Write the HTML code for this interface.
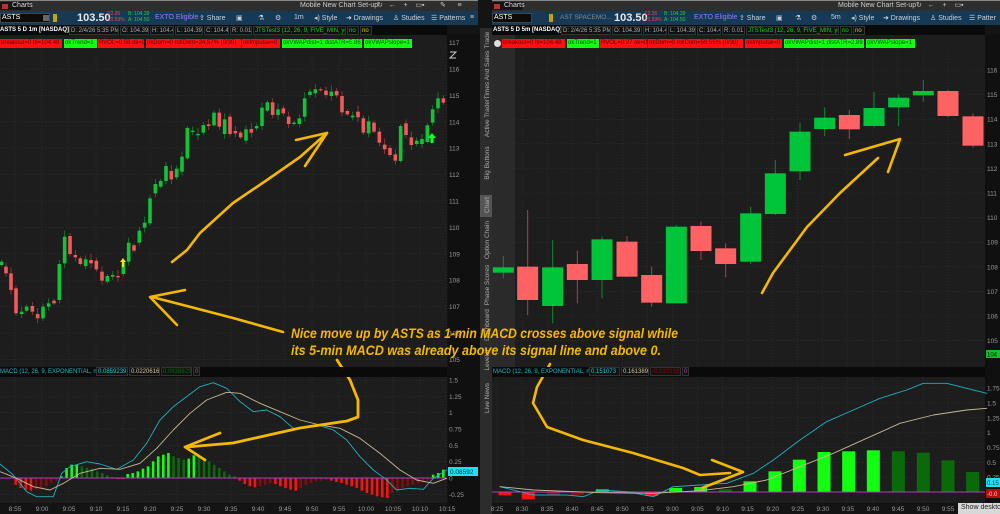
<!DOCTYPE html>
<html><head><meta charset="utf-8"><style>
*{margin:0;padding:0;box-sizing:border-box}
body{width:1000px;height:514px;overflow:hidden;background:#141414;font-family:"Liberation Sans",sans-serif;position:relative}
.a{position:absolute;white-space:nowrap}
.t{font-size:7px;line-height:9px}
.box{position:absolute;height:9px;font-size:6px;line-height:9px;padding:0 1px;white-space:nowrap;overflow:hidden}
.r{background:#ff1010;color:#600}
.g{background:#10ff10;color:#050}
.ib{position:absolute;height:9px;font-size:6px;line-height:8px;border:1px solid #333;color:#aaa;padding:0 1px;white-space:nowrap;background:#111;overflow:hidden}
.tb{font-size:7px;color:#c8d2dc}
</style></head><body>
<div class="a" style="left:0;top:0;width:478px;height:11px;background:#2e2e2e;border-top:1px solid #888"></div>
<div class="a" style="left:492px;top:0;width:508px;height:11px;background:#2e2e2e;border-top:1px solid #888"></div>
<div class="a" style="left:0;top:2px;width:31px;height:8px;background:#141414;border-radius:2px"></div>
<div class="a t" style="left:12px;top:1px;color:#ddd">Charts</div>
<div class="a" style="left:2px;top:4px;width:6px;height:5px;background:#c0302a"></div>
<div class="a" style="left:492px;top:2px;width:31px;height:8px;background:#141414;border-radius:2px"></div>
<div class="a" style="left:494px;top:4px;width:6px;height:5px;background:#c0302a"></div>
<div class="a t" style="left:504px;top:1px;color:#ddd">Charts</div>
<div class="a t" style="left:300px;top:1px;color:#ccc">Mobile New Chart Set-up</div>
<div class="a t" style="left:838px;top:1px;color:#ccc">Mobile New Chart Set-up</div>
<div class="a t" style="left:377px;top:1px;color:#ccc">↻ &nbsp; ← &nbsp;&nbsp; + &nbsp;&nbsp; ▭▪ &nbsp;&nbsp;&nbsp;&nbsp;&nbsp;&nbsp; ✎ &nbsp;&nbsp;&nbsp;&nbsp; ≡</div>
<div class="a t" style="left:916px;top:1px;color:#ccc">↻ &nbsp; ← &nbsp;&nbsp; + &nbsp;&nbsp; ▭▪</div>
<div class="a" style="left:0;top:11px;width:478px;height:14px;background:#163955"></div>
<div class="a" style="left:492px;top:11px;width:508px;height:14px;background:#163955"></div>
<div class="a" style="left:0;top:13px;width:50px;height:10px;background:#0c0c0c;border:1px solid #444"></div>
<div class="a tb" style="left:2px;top:14px;color:#fff">ASTS</div>
<div class="a" style="left:43px;top:15px;width:6px;height:6px;background:#666"></div>
<div class="a" style="left:53px;top:14px;width:4px;height:8px;background:#c8a000"></div>
<div class="a" style="left:77px;top:12px;font-size:11px;font-weight:bold;color:#e8e8e8">103.50</div>
<div class="a" style="left:106px;top:12px;font-size:5px;line-height:5.5px;color:#ff4040">-12.26<br>-10.59%</div>
<div class="a" style="left:128px;top:12px;font-size:5px;line-height:5.5px;color:#20d040">B: 104.39<br>A: 104.50</div>
<div class="a tb" style="left:155px;top:14px;color:#9a7aff">EXTO Eligible</div>
<div class="a tb" style="left:199px;top:14px">⇪ Share</div>
<div class="a tb" style="left:236px;top:14px">▣</div>
<div class="a tb" style="left:258px;top:14px">⚗</div>
<div class="a tb" style="left:275px;top:14px">⚙</div>
<div class="a tb" style="left:294px;top:14px">1m</div>
<div class="a tb" style="left:314px;top:14px">◂) Style</div>
<div class="a tb" style="left:346px;top:14px">➜ Drawings</div>
<div class="a tb" style="left:393px;top:14px">♙ Studies</div>
<div class="a tb" style="left:431px;top:14px">☰ Patterns</div>
<div class="a tb" style="left:470px;top:14px">≡</div>
<div class="a" style="left:492px;top:13px;width:40px;height:10px;background:#0c0c0c;border:1px solid #444"></div>
<div class="a tb" style="left:494px;top:14px;color:#fff">ASTS</div>
<div class="a" style="left:549px;top:14px;width:4px;height:8px;background:#c8a000"></div>
<div class="a tb" style="left:560px;top:14px;color:#888;font-size:6.5px">AST SPACEMO...</div>
<div class="a" style="left:614px;top:12px;font-size:11px;font-weight:bold;color:#e8e8e8">103.50</div>
<div class="a" style="left:643px;top:12px;font-size:5px;line-height:5.5px;color:#ff4040">-12.26<br>-10.59%</div>
<div class="a" style="left:664px;top:12px;font-size:5px;line-height:5.5px;color:#20d040">B: 104.39<br>A: 104.50</div>
<div class="a tb" style="left:694px;top:14px;color:#9a7aff">EXTO Eligible</div>
<div class="a tb" style="left:739px;top:14px">⇪ Share</div>
<div class="a tb" style="left:776px;top:14px">▣</div>
<div class="a tb" style="left:795px;top:14px">⚗</div>
<div class="a tb" style="left:811px;top:14px">⚙</div>
<div class="a tb" style="left:831px;top:14px">5m</div>
<div class="a tb" style="left:851px;top:14px">◂) Style</div>
<div class="a tb" style="left:883px;top:14px">➜ Drawings</div>
<div class="a tb" style="left:930px;top:14px">♙ Studies</div>
<div class="a tb" style="left:969px;top:14px">☰ Patter</div>
<div class="a" style="left:0;top:25px;width:447px;height:10px;background:#0a0a0a"></div>
<div class="a" style="left:492px;top:25px;width:493px;height:10px;background:#0a0a0a"></div>
<div class="a t" style="left:0;top:26px;color:#fff;font-weight:bold;font-size:6px">ASTS 5 D 1m [NASDAQ]</div>
<div class="ib" style="left:69px;top:26px;width:50px">D: 2/4/26 5:35 PM</div>
<div class="ib" style="left:120px;top:26px;width:29px">O: 104.39</div>
<div class="ib" style="left:150px;top:26px;width:24px">H: 104.4</div>
<div class="ib" style="left:175px;top:26px;width:28px">L: 104.39</div>
<div class="ib" style="left:204px;top:26px;width:25px">C: 104.4</div>
<div class="ib" style="left:230px;top:26px;width:22px">R: 0.01</div>
<div class="ib" style="left:253px;top:26px;width:93px;color:#20d020">JTSTest3 (12, 26, 9, FIVE_MIN, yes)</div>
<div class="ib" style="left:347px;top:26px;width:12px;color:#20d020">no</div>
<div class="ib" style="left:360px;top:26px;width:12px;color:#d0d000">no</div>
<div class="a t" style="left:493px;top:26px;color:#fff;font-weight:bold;font-size:6px">ASTS 5 D 5m [NASDAQ]</div>
<div class="ib" style="left:561px;top:26px;width:50px">D: 2/4/26 5:35 PM</div>
<div class="ib" style="left:612px;top:26px;width:30px">O: 104.39</div>
<div class="ib" style="left:643px;top:26px;width:24px">H: 104.4</div>
<div class="ib" style="left:668px;top:26px;width:28px">L: 104.39</div>
<div class="ib" style="left:697px;top:26px;width:24px">C: 104.4</div>
<div class="ib" style="left:722px;top:26px;width:23px">R: 0.01</div>
<div class="ib" style="left:746px;top:26px;width:93px;color:#20d020">JTSTest3 (12, 26, 9, FIVE_MIN, yes)</div>
<div class="ib" style="left:840px;top:26px;width:12px;color:#20d020">no</div>
<div class="ib" style="left:853px;top:26px;width:12px;color:#d0d000">no</div>

<svg class="a" style="left:0;top:0" width="1000" height="514" id="s"></svg>

<div class="box r" style="left:0;top:39px;width:62px">breakout=0 hl=104.48</div>
<div class="box g" style="left:64px;top:39px;width:33px">okTrend=1</div>
<div class="box r" style="left:98px;top:39px;width:46px">RVOL=0.58 ok=0</div>
<div class="box r" style="left:146px;top:39px;width:95px">okDom=0 rollDom=24.57% (0/30)</div>
<div class="box r" style="left:242px;top:39px;width:38px">okImpulse=0</div>
<div class="box g" style="left:282px;top:39px;width:80px">okVWAPdist=1 distATR=5.86</div>
<div class="box g" style="left:364px;top:39px;width:48px">okVWAPslope=1</div>
<div class="a" style="left:494px;top:40px;width:7px;height:7px;border-radius:50%;background:#ddd"></div>
<div class="box r" style="left:502px;top:39px;width:63px">breakout=0 hl=104.48</div>
<div class="box g" style="left:567px;top:39px;width:32px">okTrend=1</div>
<div class="box r" style="left:600px;top:39px;width:47px">RVOL=0.27 ok=0</div>
<div class="box r" style="left:648px;top:39px;width:95px">okDom=0 rollDom=59.55% (0/30)</div>
<div class="box r" style="left:745px;top:39px;width:37px">okImpulse=0</div>
<div class="box g" style="left:784px;top:39px;width:80px">okVWAPdist=1 distATR=2.89</div>
<div class="box g" style="left:866px;top:39px;width:49px">okVWAPslope=1</div>

<div class="a" style="left:0;top:367px;width:447px;height:10px;background:#0a0a0a"></div>
<div class="a t" style="left:0;top:368px;color:#20b8c8;font-size:6px">MACD (12, 26, 9, EXPONENTIAL, no)</div>
<div class="ib" style="left:96px;top:367px;width:32px;color:#20c8d8">0.0859239</div>
<div class="ib" style="left:129px;top:367px;width:31px;color:#d8c8a0">0.0220616</div>
<div class="ib" style="left:161px;top:367px;width:31px;color:#0a6a0a">0.0638623</div>
<div class="ib" style="left:193px;top:367px;width:7px;color:#c040c0">0</div>
<div class="a" style="left:492px;top:367px;width:493px;height:10px;background:#0a0a0a"></div>
<div class="a t" style="left:493px;top:368px;color:#20b8c8;font-size:6px">MACD (12, 26, 9, EXPONENTIAL, no)</div>
<div class="ib" style="left:589px;top:367px;width:31px;color:#20c8d8">0.151073</div>
<div class="ib" style="left:621px;top:367px;width:28px;color:#d8c8a0">0.161389</div>
<div class="ib" style="left:650px;top:367px;width:31px;color:#8a0a0a">-0.0103161</div>
<div class="ib" style="left:682px;top:367px;width:7px;color:#c040c0">0</div>

<div class="a t" style="left:958px;top:503px;width:42px;height:11px;background:#d8d8d8;color:#222;padding-left:3px;font-size:7px">Show desktop</div>

<script>
var s=document.getElementById('s'),h='';
function R(x,y,w,hh,c){h+='<rect x="'+x+'" y="'+y+'" width="'+w+'" height="'+hh+'" fill="'+c+'"/>';}
function L(x1,y1,x2,y2,c,w,d){h+='<line x1="'+x1+'" y1="'+y1+'" x2="'+x2+'" y2="'+y2+'" stroke="'+c+'" stroke-width="'+(w||1)+'"'+(d?' stroke-dasharray="'+d+'"':'')+'/>';}
function T(x,y,t,c,fs,a){h+='<text x="'+x+'" y="'+y+'" fill="'+c+'" font-size="'+(fs||7)+'" font-family="Liberation Sans,sans-serif"'+(a?' text-anchor="'+a+'"':'')+'>'+t+'</text>';}
function P(pts,c,w){h+='<polyline points="'+pts.map(function(p){return p.join(',')}).join(' ')+'" fill="none" stroke="'+c+'" stroke-width="'+w+'" stroke-linejoin="round" stroke-linecap="round"/>';}
R(0,35,447,332,'#1d1d1d');R(0,377,447,126,'#1d1d1d');R(0,503,447,11,'#141414');
R(447,35,33,479,'#101010');
R(480,28,12,486,'#2c2c2c');R(480,195,12,22,'#555');
R(492,35,493,332,'#1d1d1d');R(492,377,493,126,'#1d1d1d');R(492,503,493,11,'#141414');
R(492,35,23,332,'#2a2a2a');
R(985,35,15,479,'#101010');
for(var p=117;p>=105;p--){var y=69+(116-p)*26.4;if(y>38&&y<366){if(y>47)L(0,y,447,y,'#333',0.6,'1,2');T(449,y+2.5,p,'#999',6.5);}}
h+='<path d="M450 52 h6 l-6 6 h6" stroke="#ccc" fill="none" stroke-width="1"/>';
for(var i=0;i<=16;i++){var x=15+i*27;L(x,47,x,366,'#333',0.6,'1,2');L(x,377,x,503,'#333',0.6,'1,2');var m=55+i*5,hr=8+Math.floor(m/60);m%=60;T(x,511,hr+':'+(m<10?'0':'')+m,'#999',6.5,'middle');}
[1.5,1.25,1,0.75,0.5,0.25,0,-0.25].forEach(function(v){var y=478-v*65.4;L(0,y,447,y,'#333',0.6,'1,2');T(449,y+2.5,v,'#999',6.5);});
for(var p=116;p>=105;p--){var y=70+(116-p)*24.6;L(515,y,985,y,'#333',0.6,'1,2');T(987,y+2.5,p,'#999',6.5);}
for(var i=0;i<=18;i++){var x=497+i*25.06;L(x,47,x,366,'#333',0.6,'1,2');L(x,377,x,503,'#333',0.6,'1,2');var m=25+i*5,hr=8+Math.floor(m/60);m%=60;T(x,511,hr+':'+(m<10?'0':'')+m,'#999',6.5,'middle');}
[1.75,1.5,1.25,1,0.75,0.5,0.25].forEach(function(v){var y=492-v*59.4;L(515,y,985,y,'#333',0.6,'1,2');T(987,y+2.5,v,'#999',6.5);});
var lc=[[5,'g',605,615],[18,'r',620,640],[33,'r',640,690],[48,'r',685,760],[65,'g',755,762],[80,'g',740,752],[97,'r',738,755],[113,'r',762,775],[129,'g',740,775],[146,'g',730,740],[162,'r',722,730],[178,'g',612,720],[194,'g',530,610],[210,'r',528,582],[226,'r',585,592],[241,'r',595,612],[257,'g',598,618],[273,'r',600,610],[289,'r',602,628],[306,'r',635,662],[322,'g',648,665],[338,'g',645,650],[354,'r',648,652],[370,'g',607,642],[386,'g',548,605],[402,'r',556,572],[418,'g',512,548],[434,'g',488,503],[450,'g',415,490],[466,'g',372,400],[482,'g',363,380],[498,'g',318,363],[514,'r',333,358],[530,'g',326,352],[546,'g',290,335],[562,'g',204,295],[578,'g',212,216],[594,'g',222,226],[610,'g',195,218],[626,'r',193,198],[642,'g',158,196],[658,'r',158,200],[674,'g',178,222],[690,'r',170,222],[706,'r',213,220],[722,'r',218,232],[738,'g',208,242],[754,'r',207,218],[770,'g',198,205],[786,'g',143,198],[802,'g',127,152],[818,'r',127,165],[834,'g',148,165],[850,'r',145,160],[866,'r',170,192],[882,'g',188,192],[898,'g',175,192],[914,'g',115,170],[930,'g',95,105],[946,'g',88,100],[962,'r',88,90],[978,'r',92,105],[994,'g',95,108],[1010,'r',93,106],[1026,'r',108,157],[1042,'r',153,163],[1058,'g',167,172],[1074,'r',155,172],[1090,'r',175,218],[1106,'g',184,220],[1122,'r',188,215],[1138,'r',215,248],[1154,'r',254,268],[1170,'r',264,285],[1186,'r',283,302],[1202,'g',198,303],[1218,'r',190,225],[1234,'r',232,255],[1250,'g',242,252],[1266,'g',237,252],[1282,'g',196,246],[1298,'g',148,188],[1314,'g',115,145],[1330,'r',115,128]];
lc.forEach(function(c,i){var x=c[0]/3,t=60+c[2]/3,b=60+Math.max(c[3],c[2]+3)/3,col=c[1]=='g'?'#12c23a':'#f05a5a',wc=c[1]=='g'?'#0c8a28':'#a83a3a';var e=2+(i*7%5);L(x,t-e,x,b+e*0.8,wc,0.8);R(x-1.8,t,3.6,b-t,col);});
h+='<path d="M123 258 l-3 4 h2 v5 h2 v-5 h2z" fill="#ffe400"/>';
h+='<path d="M432 133 l-4 5 h2.5 v5 h3 v-5 h2.5z" fill="#10ff30"/>';
var rc=[[40,'g',622,638,588,655],[113,'r',620,720,450,765],[188,'g',622,738,540,790],[262,'r',612,660,572,730],[336,'g',538,660,530,715],[411,'r',545,650,528,650],[485,'r',645,728,620,740],[559,'g',500,730,495,730],[633,'r',498,573,485,600],[707,'r',565,612,550,652],[782,'g',460,605,440,612],[856,'g',340,462,300,465],[930,'g',215,334,188,360],[1004,'g',173,207,142,228],[1078,'r',165,208,150,237],[1152,'g',144,198,95,202],[1226,'g',113,142,103,198],[1300,'g',93,106,60,125],[1374,'r',93,168,90,172],[1449,'r',169,257,160,262]];
rc.forEach(function(c){var x=490+c[0]/3,col=c[1]=='g'?'#00c43a':'#ff6262',wc=c[1]=='g'?'#0a8a2a':'#b04040';L(x,60+c[4]/3,x,60+c[5]/3,wc,1);R(x-10.5,60+c[2]/3,21,(c[3]-c[2])/3,col);});
var hb=[-20,-30,-35,-38,-35,-30,-25,-15,-8,5,30,40,40,35,30,28,20,15,8,3,-3,-3,12,15,20,28,35,50,65,70,75,65,60,55,58,68,65,60,50,40,30,20,10,5,-8,-18,-25,-28,-25,-20,-15,-18,-25,-30,-35,-38,-30,-20,-15,-10,-8,-5,-8,-12,-15,-20,-25,-30,-38,-45,-50,-55,-58,-60,-45,-35,-30,-25,-20,-15,-10,-8,10,15,25];
var sp=(1330-47)/(hb.length-1);
hb.forEach(function(v,i){var x=(47+i*sp)/3,hh=v/3,prev=i?hb[i-1]:0,col;if(v>=0)col=v>=prev?'#12ff12':'#0a6a0a';else col=v<=prev?'#ff1010':'#8a0a0a';R(x-1.3,v>=0?478-hh:478,2.6,Math.abs(hh),col);});
L(0,478,447,478,'#b040c0',1);
P([[0,312],[40,345],[80,395],[110,410],[160,410],[185,340],[210,320],[260,305],[300,312],[350,328],[400,300],[440,250],[480,180],[520,140],[560,110],[600,80],[640,68],[680,85],[720,125],[760,155],[800,150],[840,170],[880,205],[920,200],[960,197],[1000,210],[1040,240],[1080,290],[1120,330],[1160,360],[1190,390],[1230,385],[1270,388],[1300,355],[1340,330]].map(function(p){return[p[0]/3,360+p[1]/3]}),'#1fb0c0',0.9);
P([[0,335],[50,355],[100,380],[150,390],[190,370],[240,340],[300,325],[360,328],[420,310],[470,265],[520,210],[570,160],[620,120],[680,97],[720,100],[780,130],[840,155],[900,180],[960,195],[1020,205],[1080,235],[1140,280],[1200,330],[1250,360],[1300,370],[1340,355]].map(function(p){return[p[0]/3,360+p[1]/3]}),'#c8b890',0.9);
var rb=[[15,-10,'r'],[85,-22,'r'],[160,-10,'dr'],[232,-10,'dr'],[307,8,'g'],[380,2,'dg'],[455,-12,'r'],[527,12,'g'],[602,15,'g'],[676,8,'dg'],[750,32,'g'],[825,62,'g'],[898,97,'g'],[972,120,'g'],[1046,122,'g'],[1120,125,'g'],[1195,122,'dg'],[1270,118,'dg'],[1344,95,'dg'],[1418,60,'dg']];
var cm={r:'#ff1010',dr:'#8a1010',g:'#12ff12',dg:'#0a6a0a'};
rb.forEach(function(b){var x=500+b[0]/3,hh=b[1]/3;R(x-6.5,hh>=0?492-hh:492,13,Math.abs(hh),cm[b[2]]);});
L(492,492,985,492,'#b040c0',1);
P([[0,380],[100,405],[200,405],[250,410],[300,390],[380,395],[460,410],[520,380],[600,375],[680,370],[760,340],[820,300],[900,240],[980,185],[1060,150],[1140,115],[1220,90],[1270,70],[1340,70],[1400,85],[1460,100]].map(function(p){return[500+p[0]/3,360+p[1]/3]}),'#1fb0c0',0.9);
P([[0,380],[100,390],[300,398],[460,400],[600,392],[700,380],[800,360],[900,320],[1000,280],[1100,235],[1200,190],[1300,165],[1400,150],[1460,145]].map(function(p){return[500+p[0]/3,360+p[1]/3]}),'#c8b890',0.9);
R(448,467,30,9,'#20e0f0');T(450,474,'0.08592','#036',6.5);
R(986,350,14,8,'#10c030');T(987,356.5,'104','#020',6);
R(986,478,14,9,'#20e0f0');T(987,485,'0.15','#036',6);
R(986,489,14,9,'#b01010');T(987,496,'-0.0','#fcc',6);
var tabs=[['Trade',40],['Times And Sales',75],['Active Trader',118],['Big Buttons',163],['Chart',205],['Option Chain',240],['Phase Scores',285],['Dashboard',325],['Level II',360],['Live News',398]];
tabs.forEach(function(t){h+='<text transform="translate(489,'+t[1]+') rotate(-90)" fill="#aaa" font-size="6.5" font-family="Liberation Sans,sans-serif" text-anchor="middle">'+t[0]+'</text>';});
var Y='#f5b800';
P([[172,262],[187,250],[200,233],[233,203],[267,180],[300,157],[327,133]],Y,2.6);
P([[296,140],[327,133],[305,166]],Y,2.6);
P([[283,332],[233,318],[183,305],[152,297]],Y,2.6);
P([[185,290],[150,297],[177,325]],Y,2.6);
P([[337,360],[350,380],[358,400],[358,417],[347,421],[300,428],[233,443],[187,447]],Y,2.8);
P([[220,433],[185,447],[205,460]],Y,2.8);
P([[550,364],[537,387],[533,403],[547,427],[583,440],[633,453],[683,468],[700,475],[730,473]],Y,2.6);
P([[712,460],[743,472],[702,488]],Y,2.6);
P([[762,293],[773,273],[807,227],[840,193],[878,158]],Y,2.6);
P([[845,155],[900,139],[888,172]],Y,2.6);
h+='<text x="291" y="338" fill="'+Y+'" font-size="14" font-weight="bold" font-style="italic" font-family="Liberation Sans,sans-serif" textLength="387" lengthAdjust="spacingAndGlyphs">Nice move up by ASTS as 1-min MACD crosses above signal while</text>';
h+='<text x="291" y="355" fill="'+Y+'" font-size="14" font-weight="bold" font-style="italic" font-family="Liberation Sans,sans-serif" textLength="370" lengthAdjust="spacingAndGlyphs">its 5-min MACD was already above its signal line and above 0.</text>';
s.innerHTML=h;
</script>
</body></html>
